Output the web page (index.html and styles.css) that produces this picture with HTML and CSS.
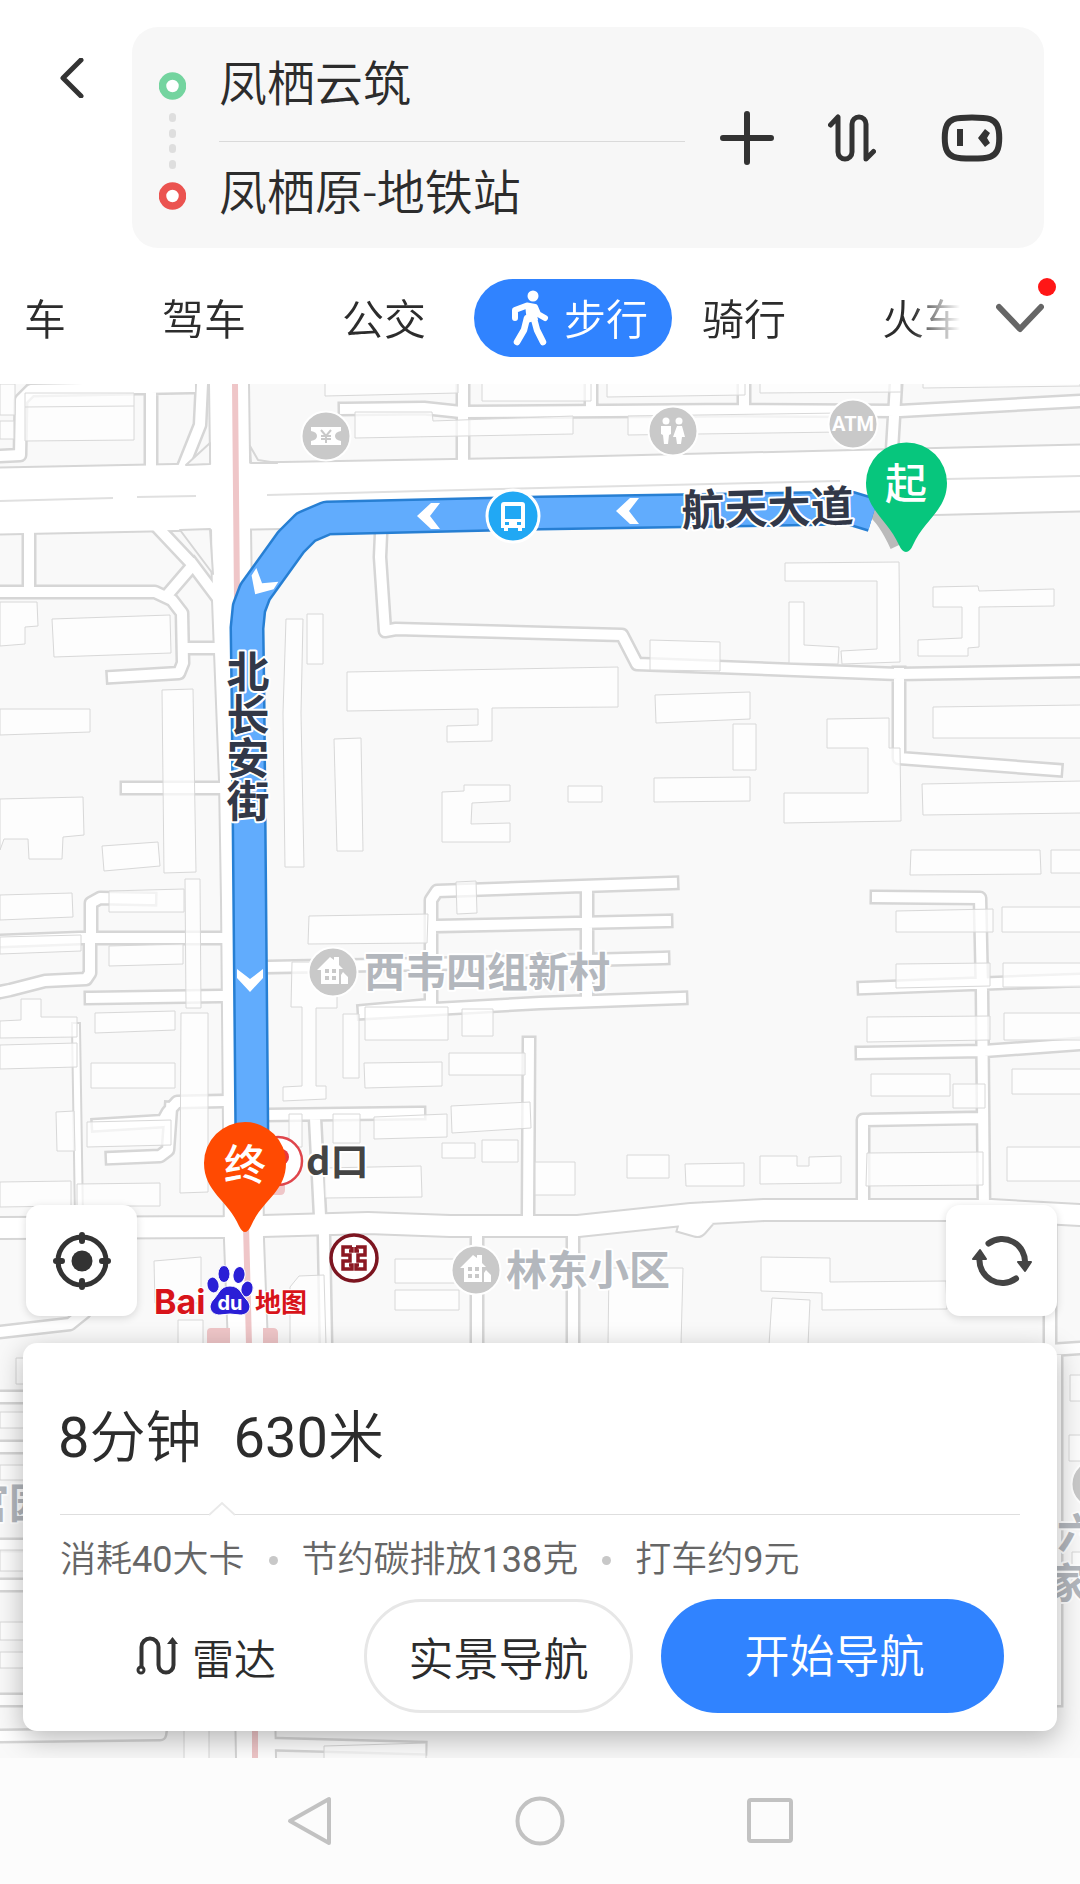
FILE: index.html
```html
<!DOCTYPE html>
<html lang="zh-CN">
<head>
  <meta charset="UTF-8" />
  <meta name="viewport" content="width=device-width, initial-scale=1.0" />
  <title>步行路线</title>
  <link rel="stylesheet" href="styles.css">
</head>
<body>
  <!-- 起终点 -->
  <header class="top">
    <div class="search">
      <button class="icon-btn back" aria-label="返回">
        <svg width="24" height="40" viewBox="0 0 24 40"><path d="M21 2 3 20 21 38" /></svg>
      </button>
      <form class="panel">
        <svg class="marks" width="27" height="138" viewBox="0 0 27 138">
          <circle cx="13.500" cy="14" r="10" fill="#fff" stroke="#74d49f" stroke-width="7.500" />
          <g fill="#dedede">
            <rect x="10" y="41" width="7" height="9" rx="3.500" /><rect x="10" y="57" width="7" height="9" rx="3.500" />
            <rect x="10" y="72" width="7" height="9" rx="3.500" /><rect x="10" y="88" width="7" height="9" rx="3.500" />
          </g>
          <circle cx="13.500" cy="124" r="10" fill="#fff" stroke="#eb5350" stroke-width="7.500" />
        </svg>
        <div class="fields">
          <input type="text" aria-label="起点" value="凤栖云筑">
          <input type="text" aria-label="终点" value="凤栖原-地铁站">
        </div>
        <div class="tools">
          <button type="button" class="icon-btn" aria-label="添加途经点">
            <svg width="54" height="54" viewBox="0 0 54 54"><path stroke-width="6" d="M27 3V51M3 27H51" /></svg>
          </button>
          <button type="button" class="icon-btn" aria-label="交换起终点">
            <svg width="48" height="50" viewBox="0 0 48 50"><path stroke-width="5" d="M2.500 12 10 4V39a7 7 0 0 0 14 0V11a7 7 0 0 1 14 0V46L45.500 38.500" /></svg>
          </button>
          <button type="button" class="icon-btn" aria-label="语音助手">
            <svg width="64" height="48" viewBox="0 0 64 48"><path stroke-width="6" d="M32 3.500C50 3.500 54 5.500 57 11C60 17 60 31 57 37C54 42.500 50 44.500 32 44.500S10 42.500 7 37C4 31 4 17 7 11C10 5.500 14 3.500 32 3.500Z" /><path stroke="none" fill="#333" d="M17 15h6v17h-6zM38 24l7-9 5 4-3 5 3 5-5 4z" /></svg>
          </button>
        </div>
      </form>
    </div>

    <!-- 出行方式 -->
    <div class="modes">
      <nav class="tabs">
        <a href="#">车</a>
        <a href="#">驾车</a>
        <a href="#">公交</a>
        <a href="#" class="active">
          <svg width="38" height="56" viewBox="0 0 38 56">
            <circle cx="22" cy="6" r="5.500" fill="#fff" />
            <path fill="none" stroke="#fff" stroke-width="6" stroke-linecap="round" stroke-linejoin="round" d="M4 28V20L16 15.500 24 17 27 24 34 28" />
            <path fill="#fff" d="M14 14h10l3 16-11 3z" />
            <path fill="none" stroke="#fff" stroke-width="6.500" stroke-linecap="round" stroke-linejoin="round" d="M16 28 13 40 6 52M23 29 26 40 32 52" />
          </svg>
          步行
        </a>
        <a href="#">骑行</a>
        <a href="#">火车</a>
      </nav>
      <button class="icon-btn more" aria-label="更多出行方式">
        <svg width="48" height="30" viewBox="0 0 48 30"><path d="M3 4 24 26 45 4" /></svg>
        <span class="badge"></span>
      </button>
    </div>
  </header>

  <main class="map">
    <svg class="canvas" viewBox="0 384 1080 1374" preserveAspectRatio="xMidYMin slice">
      <defs>
        <g id="lanes">
          <path d="M0 456 20 455 21 400 31 390 190 387M151 390V468M202 384 200 425 182 470M345 409 424 408 461 412 740 410 900 411 1080 401M463 384V458M591 384V408M744 384V408M896 384 892 450" />
          <path d="M0 592H155L172 600 182 613 183 663 179 673 113 677M29 530V592M169 593 193 565 160 530M193 565 217 597M189 648H222M127 788H222" />
          <path d="M381 534 380 557 385 631 396 629 622 635 637 664 898 674 1080 671M899 673V758L1056 770" />
          <path d="M0 941 80 938H220M91 938V903L100 898 150 899M90 940V973L86 979 45 981 10 990 0 992M91 998 220 996M223 1101 177 1102 168 1112 163 1121 98 1125M171 1108 168 1150 160 1156 112 1158" />
          <path d="M268 967 430 964 663 958M672 883 437 891 431 900V1005L364 1011M437 926 666 921M364 1013 540 1003 681 998M587 887V1000" />
          <path d="M268 1115 419 1113M315 1118 320 1216M529 1043 528 1215M573 1240V1345M477 1240V1345M324 1238 326 1345M0 1332 70 1324 85 1312V1280M1050 1220V1350L1080 1348M1056 1360V1700" />
          <path d="M877 897 980 898 982 990 984 1210M864 988 1080 980M862 1053 984 1051 1080 1044M863 1206V1120L977 1118" />
          <path d="M0 1397H30M0 1447H30M0 1545H30M0 1585H30M0 1700H30M0 1736 160 1734 165 1700M268 1700V1744L420 1748" />
        </g>
        <path id="alley" d="M76 1027 79 1218" />
        <path id="minor" d="M0 1228 224 1227 368 1223 450 1226 578 1226 691 1214 764 1210 991 1210 1080 1215M690 1224 697 1226 704 1218" />
        <path id="street" d="M229 384 232 600 239 780 241 900 244 1240 248 1345 256 1758" />
        <path id="avenue" d="M0 501 250 496 540 491 1080 478" />
        <g id="house">
          <circle r="24.500" fill="#c9c9c9" stroke="#fff" stroke-width="2" />
          <path fill="#fff" d="M-16-2-3-15 1-12V-15H6V-7L10-3H6V12H-12V-2ZM10 0 15 5V12H8V3Z" />
          <path fill="#c9c9c9" d="M-8-3h4v4h-4zM-1-3h4v4h-4zM-8 4h4v4h-4zM-1 4h4v4h-4z" />
        </g>
        <path id="chev" fill="#fff" d="M-11 0 3-13H12L2 0 12 13H3Z" />
      </defs>

      <rect y="384" width="1080" height="1374" fill="#f9f9f9" />

      <!-- 道路 -->
      <g class="casing">
        <use href="#lanes" stroke-width="15" /><use href="#alley" stroke-width="10" /><use href="#minor" stroke-width="24" />
        <use href="#street" stroke-width="42" /><use href="#avenue" stroke-width="69" />
      </g>
      <g class="surface">
        <use href="#lanes" stroke-width="10" /><use href="#alley" stroke-width="6" /><use href="#minor" stroke-width="20" />
        <use href="#street" stroke-width="38" /><use href="#avenue" stroke-width="65" />
      </g>
      <path class="centre" d="M0 501 113 498M137 497 196 496M267 495 540 488 840 481M946 479 1080 476" />
      <path class="island" d="M186 465 210 443V464ZM250 446 258 460 277 463H251ZM180 530 210 529 213 574Z" />

      <!-- 建筑 -->
      <path class="building" d="M25 393H134V440L25 441ZM25 407 134 406M0 421H14V439H0ZM0 384H15V415H0ZM0 602H37L38 626 25 627V644L0 646ZM52 619 170 615 171 653 54 657ZM0 709H90V732L0 735ZM162 690 193 689 196 872 164 873ZM0 799 83 797 84 835 63 837 62 859H29L28 839H4L0 850ZM102 846 158 842 160 866 104 871Z" />
      <path class="building" d="M286 619H303L301 713 304 867H285L283 713ZM307 614H323V664H307ZM347 672 618 667V707L492 708V741L447 742V726L478 725V709L347 711ZM334 739 361 738 363 851H337ZM442 792 464 791V785H510V801L472 803 471 824 510 823V842H442Z" />
      <path class="building" d="M325 384V396L458 393V384M482 384V401H591V384M607 384V397L745 395V384M760 384V393L901 392V384M923 384V388L1080 386V384M355 412H432L433 421 573 416V434L355 438ZM628 416 840 413V432L628 435Z" />
      <path class="building" d="M785 563 899 562 900 662 842 664 841 651 877 649V581H785ZM789 602H804V645L839 647 838 664 789 663ZM933 587 978 586 979 591 1054 589V606L979 607V647L968 648V656H918V640L962 638V607H933ZM650 640 720 642V671L650 670ZM655 695 750 692V719L656 723ZM733 724H756V770H733ZM654 778 750 777V801L654 802ZM568 786H602V802H568ZM827 719 889 718V748H900L901 821 784 823V793H868V748H827ZM933 707 1082 705V738H933ZM922 784 1082 781V813L923 815ZM911 850H1040L1041 874 910 875ZM1051 850H1082V873H1051Z" />
      <path class="building" d="M0 895 72 893 73 917 0 920ZM109 891 184 889V912H109ZM185 879H200L201 1008H186ZM0 937 81 935V951L0 954ZM109 946 183 944V964L109 966ZM21 999H41V1017H77V1037L0 1038V1021L21 1020ZM0 1045 77 1043V1067L0 1069ZM95 1013 175 1011V1030L95 1033ZM91 1063H175V1088H91ZM181 1013H208V1192L180 1193ZM56 1112 74 1111 75 1151H57ZM87 1122 171 1120V1145L87 1147ZM0 1182 71 1181V1206L0 1207ZM77 1184 160 1183V1206H77Z" />
      <path class="building" d="M309 916 428 914 427 943 308 944ZM456 882 476 881 477 913 457 914ZM292 962H337V1008H316V1086H326V1099L283 1101V1087L302 1086V1007H291ZM343 1014H359V1078H343ZM365 1007H448V1040H365ZM462 1009H493V1036H462ZM364 1063 442 1062V1086L365 1088ZM449 1053H525V1075H449ZM451 1106 530 1102 531 1128 452 1133ZM374 1117 447 1114V1137L374 1139ZM333 1114H360V1143H333ZM289 1114H302V1147H289ZM442 1143H475V1158H442ZM482 1140H518V1162H482ZM324 1168 421 1166 422 1197 325 1198Z" />
      <path class="building" d="M535 1162H575V1195H535ZM627 1155H669V1178H627ZM685 1164 744 1163V1186H686ZM760 1156H797V1166H809V1157L841 1156V1183L760 1184ZM896 911 993 909V932H896ZM1002 907H1082V932H1002ZM896 964 990 963V986L896 988ZM1003 963H1082V987H1003ZM867 1017 990 1016V1040L867 1042ZM1004 1013H1082V1040H1004ZM871 1074H950V1096H871ZM953 1084H985V1108H953ZM1012 1069H1082V1094H1012ZM867 1153 983 1152V1185L866 1186ZM1007 1147H1082V1181H1007Z" />
      <path class="building" d="M761 1257 830 1258V1282L946 1281 947 1309 822 1310V1293L761 1291ZM772 1298 810 1300 808 1345H769ZM609 1268H683L681 1345H608ZM395 1259H460V1283H395ZM395 1290H459V1310H395ZM154 1261 201 1257V1303H155ZM178 1320H203V1345H178ZM290 1287 299 1276 324 1275 326 1345H290ZM16 1358H40V1384H16ZM1070 1375H1082V1401H1070ZM1069 1435H1082V1461H1069ZM1072 1552H1082V1581H1072ZM0 1412H30V1428H0ZM0 1465H30V1480H0ZM0 1550H30V1571H0ZM0 1622H30V1640H0ZM0 1652H30V1668H0ZM184 1728H209V1760H184ZM324 1746 426 1743V1760H324Z" />

      <!-- 地铁线 -->
      <g fill="none" stroke="#efc6c8" stroke-width="6">
        <path d="M235 384 237 600M246 1225 249 1345M255 1725V1758" />
      </g>
      <path fill="#efc6c8" d="M207 1332q0-4 4-4h19v17h-23zM263 1328h10q5 0 5 5v12h-15zM272 1184h13v6q0 5-5 5h-8z" />

      <!-- 路线 -->
      <path fill="none" stroke="#bababa" stroke-width="14" d="M872 510Q884 518 897 546" />
      <g fill="none" stroke-linejoin="round">
        <path stroke="#277fd3" stroke-width="35" d="M252 1150 248 700 247 628 249 608 255 592 291 542 306 527 327 518 540 513 850 508 873 515" />
        <path stroke="#61acfd" stroke-width="30" d="M252 1150 248 700 247 628 249 608 255 592 291 542 306 527 327 518 540 513 850 508 873 515" />
      </g>
      <use href="#chev" x="428" y="516" />
      <use href="#chev" x="627" y="511" />
      <use href="#chev" transform="translate(261 585) rotate(-58)" />
      <use href="#chev" transform="translate(250 981) rotate(-90)" />

      <!-- 兴趣点 -->
      <g transform="translate(513 516)">
        <circle r="26" fill="#21a8f4" stroke="#fff" stroke-width="3" />
        <path fill="#fff" fill-rule="evenodd" d="M-9-14H9Q12-14 12-11V12H9V15H5V12H-5V15H-9V12H-12V-11Q-12-14-9-14ZM-8-10V3H8V-10ZM-8 6V9H-4V6ZM4 6V9H8V6Z" />
      </g>
      <g transform="translate(326 436)">
        <circle r="24.500" fill="#c9c9c9" stroke="#fff" stroke-width="2" />
        <path fill="#fff" d="M-15-9H15V-5Q9-4 9 0T15 5V9H-15V5Q-9 4-9 0T-15-5Z" />
        <path fill="none" stroke="#c9c9c9" stroke-width="2" d="M-5-6 0 0 5-6M0 0V7M-5 0H5M-5 3H5" />
      </g>
      <g transform="translate(673 431)">
        <circle r="24.500" fill="#c9c9c9" stroke="#fff" stroke-width="2" />
        <path fill="#fff" d="M-12-5H-2V3L-4 4-5 13H-9L-10 4-12 3ZM4-5H9L12 6H9L8 13H4L3 6H0Z" />
        <circle cx="-7" cy="-10" r="3.500" fill="#fff" /><circle cx="6" cy="-10" r="3.500" fill="#fff" />
      </g>
      <g transform="translate(853 424)">
        <circle r="24.500" fill="#c9c9c9" stroke="#fff" stroke-width="2" />
        <text class="atm" y="7">ATM</text>
      </g>
      <use href="#house" x="333" y="972" />
      <use href="#house" x="476" y="1270" />
      <use href="#house" x="1096" y="1484" />
      <g transform="translate(354 1258)">
        <circle r="23" fill="#fff" stroke="#7c1520" stroke-width="3.500" />
        <path fill="none" stroke="#8c1822" stroke-width="3.500" d="M-2-11H-11V-3H-4V3H-11V11H-2V7H-5M-2-11V-7H-5M2-11H11V-3H4V3H11V11H2V7H5M2-11V-7H5" />
      </g>
      <circle cx="278" cy="1161" r="24" fill="#fff" stroke="#df464c" stroke-width="2.500" />
      <circle cx="281" cy="1157" r="8" fill="#e8393c" />

      <!-- 地名 -->
      <text class="road" x="682" y="526" transform="rotate(-1.500 682 526)">航天大道</text>
      <text class="road vertical" x="248" y="650">北长安街</text>
      <text class="place" x="364" y="987">西韦四组新村</text>
      <text class="place" x="506" y="1285">林东小区</text>
      <text class="place" x="-32" y="1518">官园</text>
      <text class="place"><tspan x="1057" y="1548">六</tspan><tspan x="1046" y="1598">家属</tspan></text>
      <text class="exit" x="306" y="1175">d口</text>

      <!-- 起终点标记 -->
      <path fill="#07c67d" d="M906 552Q902 552 899 545C888 520 866 510 866 483A40.500 40.500 0 0 1 947 483C947 510 924 520 913 545Q910 552 906 552Z" />
      <text class="pin" x="906" y="499">起</text>
      <path fill="#ff4a02" d="M245 1232Q242 1232 239 1226C228 1200 204 1192 204 1163A41 41 0 0 1 286 1163C286 1192 262 1200 251 1226Q248 1232 245 1232Z" />
      <text class="pin" x="245" y="1180">终</text>

      <!-- 百度地图标志 -->
      <g class="logo">
        <text class="bai" x="154" y="1314">Bai</text>
        <g fill="#2a1fd6" stroke="#fff" stroke-width="1">
          <ellipse cx="213" cy="1285" rx="6" ry="8" transform="rotate(-12 213 1285)" />
          <ellipse cx="224" cy="1274" rx="6" ry="8.500" />
          <ellipse cx="239" cy="1275" rx="6" ry="8.500" transform="rotate(8 239 1275)" />
          <ellipse cx="247" cy="1289" rx="6" ry="8" transform="rotate(15 247 1289)" />
          <path d="M230 1286C240 1286 241 1294 247 1300C253 1307 249 1315 240 1315Q230 1313 220 1315C211 1315 207 1307 213 1300C219 1294 220 1286 230 1286Z" />
        </g>
        <text class="du" x="230" y="1310">du</text>
        <text class="ditu" x="255" y="1312">地图</text>
      </g>
    </svg>

    <div class="overlay">
      <div class="float-row">
        <button class="float-btn" aria-label="定位">
          <svg width="60" height="60" viewBox="0 0 60 60">
            <circle cx="30" cy="30" r="24" fill="none" stroke="#333" stroke-width="5" />
            <circle cx="30" cy="30" r="10.500" fill="#333" />
            <path fill="none" stroke="#333" stroke-width="6" stroke-linecap="round" d="M30 4V10M30 50V56M4 30H10M50 30H56" />
          </svg>
        </button>
        <button class="float-btn" aria-label="刷新">
          <svg width="60" height="60" viewBox="0 0 60 60">
            <path fill="none" stroke="#444" stroke-width="6" stroke-linecap="round" d="M16.500 12.500A23 23 0 0 1 53 33M44 47.500A23 23 0 0 1 7.500 27" />
            <path fill="#444" stroke="#444" stroke-width="2" stroke-linejoin="round" d="M46 31H59L53 40ZM1 28H14L8 19Z" />
          </svg>
        </button>
      </div>

      <!-- 路线信息 -->
      <section class="card">
        <h1><span><b>8</b>分钟</span><span><b>630</b>米</span></h1>
        <div class="rule"><svg width="26" height="15" viewBox="0 0 26 15"><path fill="#fff" stroke="#e9e9e9" stroke-width="2" d="M0 14 13 2 26 14" /></svg></div>
        <ul class="facts">
          <li>消耗<b>40</b>大卡</li>
          <li>节约碳排放<b>138</b>克</li>
          <li>打车约<b>9</b>元</li>
        </ul>
        <div class="actions">
          <button class="radar">
            <svg width="42" height="40" viewBox="0 0 42 40">
              <g fill="none" stroke="#333" stroke-width="4"><circle cx="5" cy="34" r="3" stroke-width="3" /><path d="M5.500 31V11a8.500 8.500 0 0 1 17 0V29a7.500 7.500 0 0 0 15 0V6" /></g>
              <path fill="#333" d="M31 8 36.500 1 42 8z" />
            </svg>
            雷达
          </button>
          <button class="pill">实景导航</button>
          <button class="pill primary">开始导航</button>
        </div>
      </section>
    </div>
  </main>

  <!-- 系统导航栏 -->
  <footer class="sysbar">
    <button class="icon-btn" aria-label="后退"><svg width="48" height="50" viewBox="0 0 48 50"><path d="M4 25 43 3V47Z" /></svg></button>
    <button class="icon-btn" aria-label="主屏幕"><svg width="50" height="50" viewBox="0 0 50 50"><circle cx="25" cy="25" r="22.500" /></svg></button>
    <button class="icon-btn" aria-label="最近任务"><svg width="48" height="50" viewBox="0 0 48 50"><rect x="3" y="4" width="42" height="41" rx="2" /></svg></button>
  </footer>
</body>
</html>
```

FILE: styles.css
```css
/* 重置样式 */
* { margin: 0; padding: 0; box-sizing: border-box; }
body {
  min-height: 100vh;
  display: flex; flex-direction: column;
  background: #fff;
  color: #2c2c2c;
  font-family: Roboto, "Noto Sans CJK SC", sans-serif;
  font-weight: 350;
  overflow-x: hidden;
}
button, input { font: inherit; color: inherit; border: none; background: none; }
button { cursor: pointer; }
a { color: inherit; text-decoration: none; }
svg { display: block; flex: none; }

.icon-btn { flex: none; }
.icon-btn path { fill: none; stroke: #333; stroke-linecap: round; stroke-linejoin: round; }
.icon-btn path[fill] { fill: #333; stroke: none; }

/* 顶部搜索 */
.top { padding-top: 27px; }
.search { display: flex; align-items: flex-start; padding-right: 36px; }
.back { padding: 31px 48px 20px 60px; }
.back path { stroke-width: 5px; }
.panel {
  flex: 1; min-width: 0;
  display: flex; align-items: center;
  padding: 0 40px 0 27px;
  background: #f7f7f7;
  border-radius: 26px;
}
.marks { margin-top: 6px; }
.fields { flex: 1; min-width: 0; margin: 0 35px 0 33px; }
.fields input {
  display: block;
  width: 100%; height: 106px;
  padding-bottom: 12px;
  font-size: 48px;
  outline: none;
}
.fields input:first-child { height: 115px; padding-bottom: 8px; border-bottom: 1px solid #dadada; }
.tools { display: flex; align-items: center; gap: 54px; }
.tools .icon-btn:last-child { margin-left: 10px; }

/* 出行方式 */
.modes { display: flex; align-items: center; padding: 31px 36px 27px 24px; }
.tabs {
  flex: 1; min-width: 0;
  display: flex; align-items: center; gap: 96px;
  height: 78px;
  overflow: hidden;
  white-space: nowrap;
  font-size: 42px; line-height: 72px;
  -webkit-mask-image: linear-gradient(to left, transparent 12px, #000 60px);
  mask-image: linear-gradient(to left, transparent 12px, #000 60px);
}
.tabs a { height: 78px; padding-top: 6px; }
.tabs .active {
  display: flex; align-items: center; gap: 15px;
  padding: 6px 24px 0 37px;
  margin: 0 -66px 0 -48px;
  border-radius: 39px;
  background: #3083ff;
  color: #fff;
}
.active svg { margin-bottom: 6px; }
.more { position: relative; margin-left: 24px; }
.more path { stroke: #666; stroke-width: 6px; }
.badge {
  position: absolute;
  top: -25px; right: -12px;
  width: 18px; height: 18px;
  border-radius: 50%;
  background: #ff1616;
}

/* 地图 */
.map {
  flex: 1;
  position: relative;
  display: flex; flex-direction: column; justify-content: flex-end;
  overflow: hidden;
  background: #f9f9f9;
}
.canvas { position: absolute; inset: 0; width: 100%; height: 100%; }
.casing { fill: none; stroke: #d6d6d6; stroke-linejoin: round; stroke-linecap: square; }
.surface { fill: none; stroke: #fff; stroke-linejoin: round; stroke-linecap: square; }
.centre { fill: none; stroke: #e0e0e0; stroke-width: 2px; }
.island { fill: #f9f9f9; stroke: #d6d6d6; stroke-width: 2px; stroke-linejoin: round; }
.building { fill: #fff; fill-opacity: 0.7; stroke: #d8d8d8; stroke-width: 1px; }

.canvas text { font-family: "Noto Sans CJK SC", sans-serif; font-weight: 700; paint-order: stroke; stroke-linejoin: round; }
.road { font-size: 43px; fill: #323848; stroke: #fff; stroke-width: 4px; }
.vertical { writing-mode: vertical-rl; }
.canvas .place { font-size: 41px; fill: #b3b7bd; stroke: #fff; stroke-width: 4px; }
.exit { font-size: 38px; fill: #444; stroke: #fff; stroke-width: 4px; }
.canvas .pin { font-size: 42px; font-weight: 500; fill: #fff; text-anchor: middle; }
.canvas .atm { font-family: Roboto, sans-serif; font-size: 20px; fill: #fff; text-anchor: middle; }
.logo text { stroke: #fff; stroke-width: 2px; }
.canvas .bai { font-family: Inter, sans-serif; font-size: 34px; fill: #d8141a; }
.canvas .du { font-family: Inter, sans-serif; font-size: 20px; fill: #fff; stroke: none; text-anchor: middle; }
.ditu { font-size: 26px; fill: #d8141a; }

/* 地图上的控件 */
.overlay { position: relative; padding: 0 23px 27px; }
.float-row { display: flex; justify-content: space-between; padding: 0 0 27px 3px; }
.float-btn {
  width: 111px; height: 111px;
  display: flex; align-items: center; justify-content: center;
  border-radius: 14px;
  background: #fff;
  box-shadow: 0 2px 8px rgba(0,0,0,0.14);
}

/* 路线信息卡片 */
.card {
  padding: 55px 37px 18px;
  background: #fff;
  border-radius: 14px;
  box-shadow: 0 8px 28px rgba(0,0,0,0.28);
}
.card b { font-weight: 400; }
.card h1 {
  display: flex; gap: 32px;
  padding-bottom: 36px;
  margin-left: -2px;
  font-size: 56px; line-height: 80px; font-weight: 350;
}
.rule { height: 1px; background: #dedede; }
.rule svg { position: absolute; margin: -13px 0 0 149px; }
.facts {
  display: flex;
  margin: 20px 0 14px;
  list-style: none;
  font-size: 36px; line-height: 50px;
  color: #666;
}
.facts li { display: flex; align-items: center; }
.facts li + li:before {
  content: '';
  width: 9px; height: 9px;
  margin: 0 24px;
  border-radius: 50%;
  background: #c8c8c8;
}
.actions {
  display: grid;
  grid-template-columns: 276fr 269fr 343fr;
  gap: 28px;
  height: 114px;
  padding-right: 16px;
}
.actions button { font-size: 45px; }
.actions .radar {
  display: flex; align-items: center; justify-content: center; gap: 14px;
  padding-left: 16px;
  font-size: 42px;
}
.pill { border-radius: 57px; }
.pill:not(.primary) { border: 3px solid #e7e7e7; }
.actions .primary { padding: 0 0 6px 4px; background: #3083ff; color: #fff; }

/* 系统导航栏 */
.sysbar {
  display: flex; align-items: center; justify-content: center; gap: 181px;
  height: 126px;
  background: #fcfcfc;
}
.sysbar svg * { fill: none; stroke: #c2c2c2; stroke-width: 4px; stroke-linejoin: round; }
```
